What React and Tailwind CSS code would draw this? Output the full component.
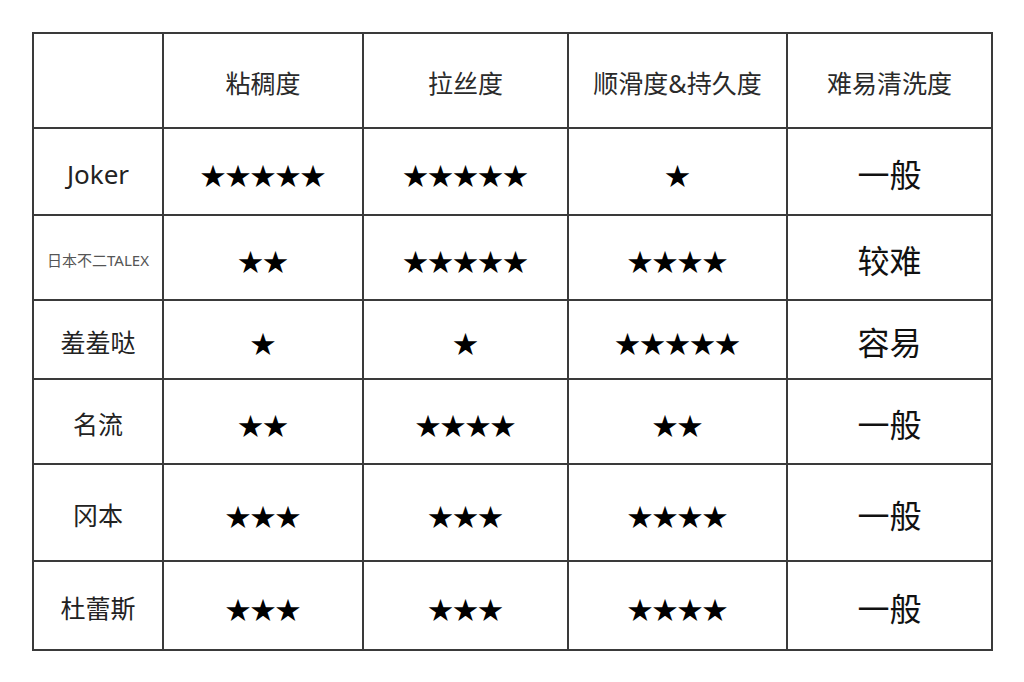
const HEADERS = ["", "粘稠度", "拉丝度", "顺滑度&持久度", "难易清洗度"];

const ROWS = [
  { name: "Joker", cols: [5, 5, 1], wash: "一般", nameClass: "text-[26px]" },
  { name: "日本不二TALEX", cols: [2, 5, 4], wash: "较难", nameClass: "text-[15px] text-[#555]" },
  { name: "羞羞哒", cols: [1, 1, 5], wash: "容易", nameClass: "text-[25px]" },
  { name: "名流", cols: [2, 4, 2], wash: "一般", nameClass: "text-[25px]" },
  { name: "冈本", cols: [3, 3, 4], wash: "一般", nameClass: "text-[25px]" },
  { name: "杜蕾斯", cols: [3, 3, 4], wash: "一般", nameClass: "text-[25px]" },
];

const cell =
  "flex items-center justify-center border-r-2 border-b-2 border-[#3a3a3a] pt-[6px]";

function stars(n) {
  return "★".repeat(n);
}

export default function App() {
  return (
    <div
      className="min-h-[682px] w-[1024px] bg-white pl-[32px] pt-[32px]"
      style={{ fontFamily: '"Noto Sans", "Noto Sans CJK SC", sans-serif' }}
    >
      <div className="grid w-[961px] grid-cols-[130px_200px_205px_219px_205px] grid-rows-[95px_87px_85px_79px_85px_97px_89px] border-l-2 border-t-2 border-[#3a3a3a]">
        {HEADERS.map((h, i) => (
          <div key={i} className={`${cell} text-[25px] text-[#2a2a2a]`}>
            {h}
          </div>
        ))}

        {ROWS.map((row) => (
          <div key={row.name} className="contents">
            <div className={`${cell} text-[#222] ${row.nameClass}`}>
              {row.name}
            </div>
            {row.cols.map((n, i) => (
              <div
                key={i}
                className={`${cell} text-[25px] leading-none text-black`}
                style={{ fontFamily: '"Noto Sans CJK SC", sans-serif' }}
              >
                {stars(n)}
              </div>
            ))}
            <div className={`${cell} text-[32px] text-[#111]`}>{row.wash}</div>
          </div>
        ))}
      </div>
    </div>
  );
}
